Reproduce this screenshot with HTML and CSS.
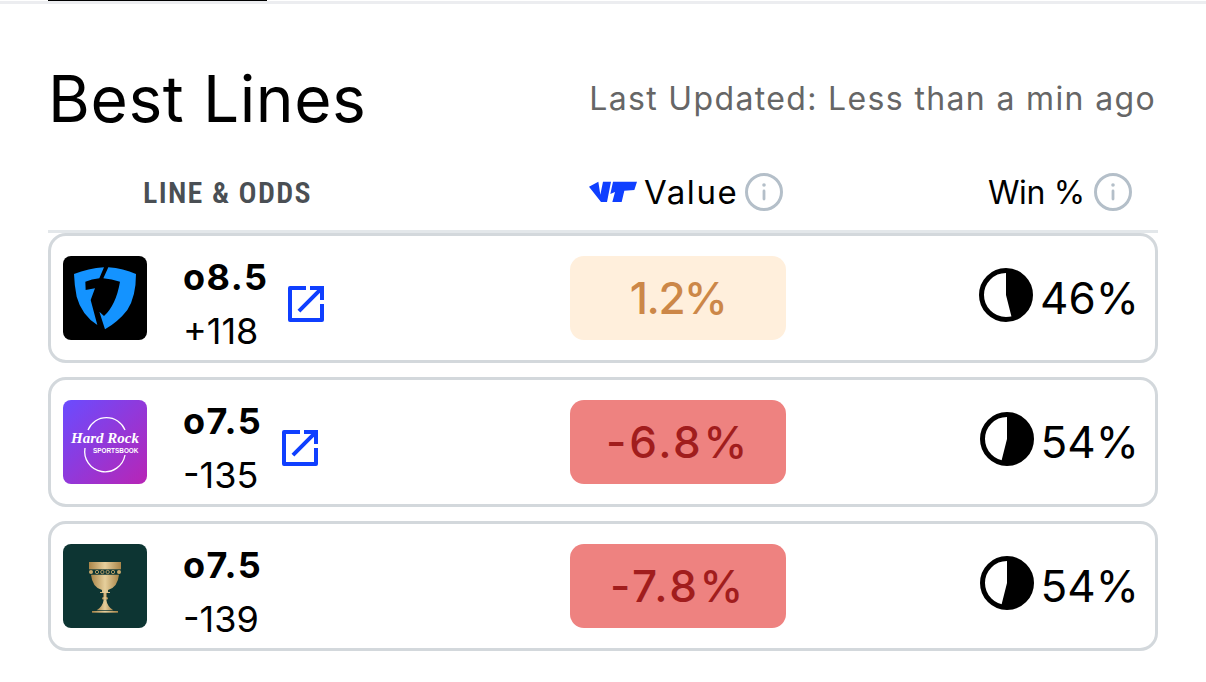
FILE: index.html
```html
<!DOCTYPE html>
<html lang="en">
<head>
<meta charset="utf-8">
<title>Best Lines</title>
<link rel="stylesheet" href="styles.css">
</head>
<body>
<div class="tabs"><div class="tab-active"></div></div>
<main class="panel">
  <header class="title-row">
    <h1 class="title">Best Lines</h1>
    <p class="updated">Last Updated: Less than a min ago</p>
  </header>
  <div class="cols">
    <div class="col-line">LINE &amp; ODDS</div>
    <div class="col-value">
      <svg class="wp" viewBox="0 0 144 72"><path fill="#0f3fff" d="M0 20 L28 5 L34 44 L42 5 L66 5 L54 66 L36 66 Z M72 5 L144 5 L136 30 L106 32 L98 66 L70 66 L78 36 L64 42 Z"/></svg>
      <span class="col-label-value">Value</span>
      <svg class="info" viewBox="0 0 38 38"><circle cx="19" cy="19" r="17.5" fill="none" stroke="#b4bfc9" stroke-width="3"/><rect x="17.6" y="16.5" width="2.8" height="11" rx="1.4" fill="#b4bfc9"/><circle cx="19" cy="12" r="1.8" fill="#b4bfc9"/></svg>
    </div>
    <div class="col-win">
      <span class="col-label-win">Win %</span>
      <svg class="info" viewBox="0 0 38 38"><circle cx="19" cy="19" r="17.5" fill="none" stroke="#b4bfc9" stroke-width="3"/><rect x="17.6" y="16.5" width="2.8" height="11" rx="1.4" fill="#b4bfc9"/><circle cx="19" cy="12" r="1.8" fill="#b4bfc9"/></svg>
    </div>
  </div>

  <section class="row">
    <div class="book">
      <svg class="logo" viewBox="69 48 252 252"><rect x="69" y="48" width="252" height="252" rx="24" fill="#000"/><path fill="#1493ff" d="M102 102 Q145 85 192 82 L178 115 Q155 118 136 125 L137 150 L165 145 L152 180 L172 255 Q125 225 110 170 Q103 135 102 102 Z"/><path fill="#1493ff" d="M205 82 Q250 85 288 102 Q288 170 262 210 Q235 245 195 268 L178 215 L192 228 Q228 195 240 125 Q215 118 190 115 Z"/></svg>
      <div class="odds"><div class="line">o8.5</div><div class="price">+118</div></div>
      <svg class="ext" viewBox="3 3 18 18"><path d="M19 19H5V5h7V3H4a1 1 0 0 0-1 1v16a1 1 0 0 0 1 1h16a1 1 0 0 0 1-1v-8h-2v7zM14 3v2h3.59l-9.83 9.83 1.41 1.41L19 6.41V10h2V3h-7z"/></svg>
    </div>
    <div class="pill pill-warn">1.2%</div>
    <div class="win">
      <svg class="pie" viewBox="0 0 54 54"><circle cx="27" cy="27" r="24.5" fill="#fff" stroke="#000" stroke-width="5"/><path d="M27 27 L27 2.5 A24.5 24.5 0 0 1 33 50.7 Z"/></svg>
      <span>46%</span>
    </div>
  </section>

  <section class="row">
    <div class="book">
      <svg class="logo" viewBox="0 0 84 84"><defs><linearGradient id="hr" x1="0" y1="0" x2="1" y2="1"><stop offset="0" stop-color="#6a4cff"/><stop offset="1" stop-color="#b825b5"/></linearGradient></defs><rect width="84" height="84" rx="8" fill="url(#hr)"/><path d="M25 30 A20 20 0 0 1 62 30 M62 55 A20 20 0 0 1 22 48" fill="none" stroke="#fff" stroke-width="1.3"/><text class="hr-name" x="42" y="43" text-anchor="middle">Hard Rock</text><text class="hr-sub" x="30" y="53">SPORTSBOOK</text></svg>
      <div class="odds"><div class="line">o7.5</div><div class="price">-135</div></div>
      <svg class="ext" viewBox="3 3 18 18"><path d="M19 19H5V5h7V3H4a1 1 0 0 0-1 1v16a1 1 0 0 0 1 1h16a1 1 0 0 0 1-1v-8h-2v7zM14 3v2h3.59l-9.83 9.83 1.41 1.41L19 6.41V10h2V3h-7z"/></svg>
    </div>
    <div class="pill pill-bad">-6.8%</div>
    <div class="win">
      <svg class="pie" viewBox="0 0 54 54"><circle cx="27" cy="27" r="24.5" fill="#fff" stroke="#000" stroke-width="5"/><path d="M27 27 L27 2.5 A24.5 24.5 0 1 1 21 50.7 Z"/></svg>
      <span>54%</span>
    </div>
  </section>

  <section class="row">
    <div class="book">
      <svg class="logo" viewBox="69 42 252 252"><defs><linearGradient id="gold" x1="0" y1="0" x2="1" y2="0"><stop offset="0" stop-color="#a98549"/><stop offset=".5" stop-color="#e6cf9c"/><stop offset="1" stop-color="#a98549"/></linearGradient></defs><rect x="69" y="42" width="252" height="252" rx="24" fill="#0d3533"/><g fill="url(#gold)"><rect x="147" y="96" width="96" height="22"/><path d="M153 134 H237 Q233 172 204 180 V186 H210 V189 H180 V186 H186 V180 Q157 172 153 134 Z"/><rect x="190" y="189" width="10" height="12"/><ellipse cx="195" cy="205" rx="9" ry="5"/><path d="M191 209 H199 Q201 228 220 241 H170 Q189 228 191 209 Z"/><rect x="156" y="243" width="78" height="5"/></g><g fill="none" stroke="#c9a96c" stroke-width="2.5"><circle cx="171" cy="126" r="5"/><circle cx="187" cy="126" r="5"/><circle cx="203" cy="126" r="5"/><circle cx="219" cy="126" r="5"/></g><circle cx="153" cy="126" r="6" fill="#c9a96c"/><circle cx="237" cy="126" r="6" fill="#c9a96c"/></svg>
      <div class="odds"><div class="line">o7.5</div><div class="price">-139</div></div>
    </div>
    <div class="pill pill-bad">-7.8%</div>
    <div class="win">
      <svg class="pie" viewBox="0 0 54 54"><circle cx="27" cy="27" r="24.5" fill="#fff" stroke="#000" stroke-width="5"/><path d="M27 27 L27 2.5 A24.5 24.5 0 1 1 21 50.7 Z"/></svg>
      <span>54%</span>
    </div>
  </section>
</main>
</body>
</html>
```
FILE: styles.css
```css
* { box-sizing: border-box; }
html, body { margin: 0; padding: 0; background: #fff; overflow: hidden; }
body { font-family: Inter, "Noto Sans", sans-serif; color: #000; height: 682px; }

.tabs { height: 4px; border-bottom: 3px solid #ecedf0; }
.tab-active { width: 219px; height: 1px; margin-left: 48px; background: #000; }

.panel { margin: 0 48px; }

.title-row { display: flex; justify-content: space-between; align-items: center; padding: 60px 2px 27px 0; height: 156px; }
.title { margin: 0; font-size: 64px; font-weight: 400; line-height: 70px; letter-spacing: 0.6px; }
.updated { margin: 0; font-size: 32px; font-weight: 400; color: #666; line-height: 40px; letter-spacing: 1.35px; }

.cols { display: grid; grid-template-columns: 524px 216px 1fr; align-items: center; height: 73px; padding-bottom: 6px; border-bottom: 3px solid #e3e7ea; font-size: 32px; }
.col-line { padding-left: 95px; font-family: Roboto, sans-serif; font-stretch: 75%; font-weight: 600; font-size: 30px; letter-spacing: 1.3px; color: #4a4f54; }
.col-value { display: flex; align-items: center; gap: 7px; padding-left: 17px; white-space: nowrap; }
.col-label-value { font-size: 33px; letter-spacing: 1.6px; }
.col-win { display: flex; align-items: center; justify-content: flex-end; gap: 9px; padding-right: 26px; }
.col-label-win { letter-spacing: -0.3px; }
.wp { width: 48px; height: 24px; }
.info { width: 38px; height: 38px; }

.row { display: grid; grid-template-columns: 507px 216px 1fr; align-items: center; height: 130px; margin-bottom: 14px; border: 3px solid #d3d8dc; border-radius: 18px; padding: 0 16px 0 12px; }
.book { display: flex; align-items: center; }
.logo { width: 84px; height: 84px; flex: none; }
.odds { margin: 12px 19.5px 0 36px; }
.line { font-size: 36px; font-weight: 700; line-height: 54px; letter-spacing: 1.5px; }
.price { font-size: 36px; font-weight: 400; line-height: 54px; }
.ext { width: 36px; height: 36px; margin-top: 12px; fill: #0f3fff; }

.pill { height: 84px; border-radius: 14px; display: flex; align-items: center; justify-content: center; font-size: 44px; font-weight: 500; }
.pill-warn { background: #ffefdc; color: #cc8748; letter-spacing: -1.5px; }
.pill-bad { background: #ee8280; color: #a11d1d; letter-spacing: 2.7px; }

.win { display: flex; align-items: center; justify-content: flex-end; gap: 7px; font-size: 44px; }
.pie { width: 54px; height: 54px; margin-bottom: 6px; }

.hr-name { font-family: "Liberation Serif", serif; font-style: italic; font-weight: 700; font-size: 15px; fill: #fff; }
.hr-sub { font-family: "Liberation Sans", sans-serif; font-weight: 700; font-size: 6.4px; fill: #fff; }
```
